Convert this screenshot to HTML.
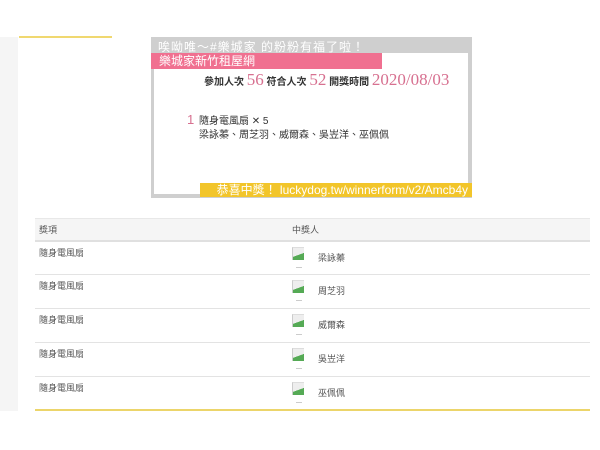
<!DOCTYPE html>
<html><head><meta charset="utf-8"><style>
body{margin:0;width:600px;height:450px;background:#fff;position:relative;font-family:"Liberation Sans","Noto Sans CJK TC",sans-serif;overflow:hidden}
.a{position:absolute}
.strip{left:0;top:37px;width:18px;height:374px;background:#f5f5f5}
.yl{left:19px;top:36px;width:93px;height:2px;background:#f0d870}
.img{left:151px;top:37px;width:321px;height:161px;background:#cfcfcf}
.inner{left:154px;top:53px;width:314px;height:141px;background:#fff}
.t{color:#fff;font-size:12px;left:158px;top:38px;letter-spacing:1px}
.pink{left:151px;top:53px;width:231px;height:16px;background:#f07090;color:#fff;font-size:12px;line-height:16px;padding-left:8px;box-sizing:border-box}
.sm{font-size:10px;color:#333;font-weight:bold}
.big{font-family:"Liberation Serif",serif;color:#d77090;font-size:17px;font-weight:normal}
.ybar{left:200px;top:183px;width:272px;height:14px;background:#f2c52a;color:#fff;font-size:12px;line-height:14px;text-align:right;padding-right:4px;box-sizing:border-box}
table{position:absolute;left:35px;top:218px;width:555px;border-collapse:collapse;font-size:9px;color:#555}
th{background:#f5f5f5;text-align:left;font-weight:normal;height:22px;padding:0 0 0 4px;border-top:1px solid #e8e8e8;border-bottom:2px solid #e0e0e0;box-sizing:border-box}
td{height:34px;border-bottom:1px solid #e3e3e3;vertical-align:top;padding:4px 0 0 4px;box-sizing:border-box;position:relative}
td.n{padding-top:9px;padding-left:30px}
.ic{position:absolute;left:4px;top:5px;width:11px;height:12px;border-left:1px solid #ccc;border-top:1px solid #ddd;background:linear-gradient(160deg,#eee 55%,#5a5 56%)}
.ic:after{content:"";position:absolute;left:3px;top:19px;width:6px;height:1px;background:#ccc}
.bot{left:35px;top:409px;width:555px;height:2px;background:#ecd56a}
</style></head><body>
<div class="a strip"></div><div class="a yl"></div>
<div class="a img"></div><div class="a inner"></div>
<div class="a t">唉呦唯～#樂城家 的粉粉有福了啦！</div>
<div class="a pink">樂城家新竹租屋網</div>
<div class="a sm" style="left:204px;top:70px;white-space:nowrap">參加人次 <span class="big">56</span> 符合人次 <span class="big">52</span> 開獎時間 <span class="big">2020/08/03</span></div>
<div class="a" style="left:187px;top:112px;font-size:13px;color:#d77090">1</div>
<div class="a" style="left:199px;top:112px;font-size:10px;color:#333">隨身電風扇 ✕ 5</div>
<div class="a" style="left:199px;top:126px;font-size:10px;color:#333">梁詠蓁、周芝羽、威爾森、吳岦洋、巫佩佩</div>
<div class="a ybar">恭喜中獎！ luckydog.tw/winnerform/v2/Amcb4y</div>
<table>
<tr><th style="width:253px">獎項</th><th>中獎人</th></tr>
<tr><td>隨身電風扇</td><td class="n"><span class="ic"></span>梁詠蓁</td></tr>
<tr><td>隨身電風扇</td><td class="n"><span class="ic"></span>周芝羽</td></tr>
<tr><td>隨身電風扇</td><td class="n"><span class="ic"></span>威爾森</td></tr>
<tr><td>隨身電風扇</td><td class="n"><span class="ic"></span>吳岦洋</td></tr>
<tr><td>隨身電風扇</td><td class="n"><span class="ic"></span>巫佩佩</td></tr>
</table>
<div class="a bot"></div>
</body></html>
